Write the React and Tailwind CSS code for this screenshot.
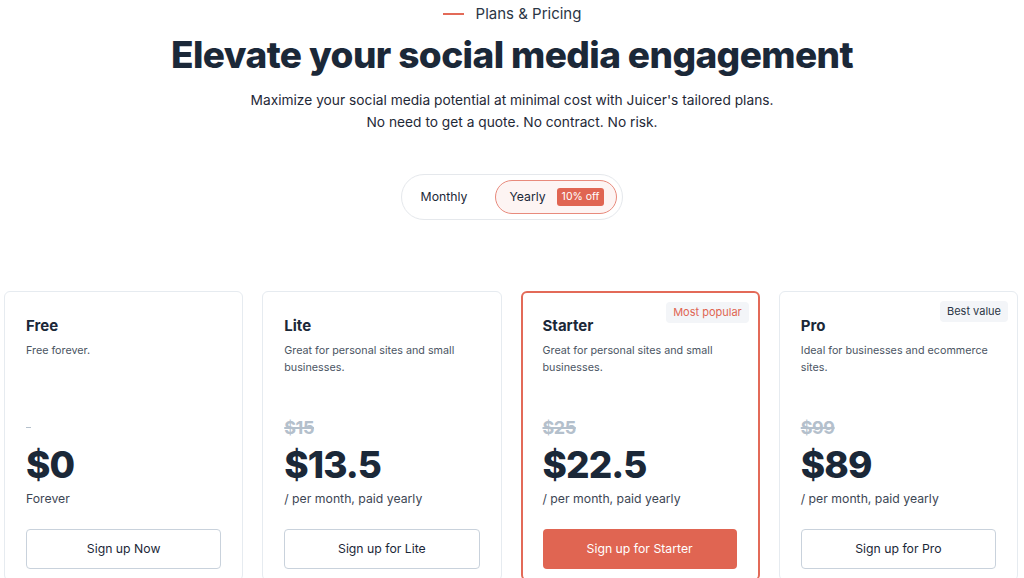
import React from 'react';

const plans = [
  {
    name: 'Free',
    desc: 'Free forever.',
    old: null,
    price: '$0',
    period: 'Forever',
    cta: 'Sign up Now',
  },
  {
    name: 'Lite',
    desc: 'Great for personal sites and small businesses.',
    old: '$15',
    price: '$13.5',
    period: '/ per month, paid yearly',
    cta: 'Sign up for Lite',
  },
  {
    name: 'Starter',
    desc: 'Great for personal sites and small businesses.',
    old: '$25',
    price: '$22.5',
    period: '/ per month, paid yearly',
    cta: 'Sign up for Starter',
    badge: 'Most popular',
    featured: true,
  },
  {
    name: 'Pro',
    desc: 'Ideal for businesses and ecommerce sites.',
    old: '$99',
    price: '$89',
    period: '/ per month, paid yearly',
    cta: 'Sign up for Pro',
    badge: 'Best value',
  },
];

const PlanCard = ({ plan }) => (
  <div
    className={`relative flex flex-col rounded-md bg-white pr-[21px] ${
      plan.featured
        ? 'border-2 border-[#e36a58] pl-[20px] pt-[23px]'
        : 'border border-[#e6ebf0] pl-[21px] pt-[24px]'
    }`}
  >
    {plan.badge && (
      <span
        className={`absolute right-[9px] top-[9px] rounded bg-[#f3f5f8] px-[7px] py-[3px] text-[11px] leading-[15px] ${
          plan.featured ? 'text-[#e06552]' : 'text-[#2b3645]'
        }`}
      >
        {plan.badge}
      </span>
    )}
    <h3 className="text-[15px] font-bold leading-[20px] text-[#1b2838]">{plan.name}</h3>
    <p className="mt-[6px] h-[68px] text-[10.75px] leading-[17px] text-[#4b5563]">{plan.desc}</p>
    <div className="mt-[6px] h-[24px] text-[18px] font-bold leading-[24px] tracking-tight text-[#b4c0cc]">
      {plan.old ? (
        <span className="line-through decoration-2">{plan.old}</span>
      ) : (
        <span className="inline-block h-[1px] w-[5px] translate-y-[-2px] bg-[#b4c0cc] align-middle" />
      )}
    </div>
    <div className="mt-[3px] text-[37px] font-extrabold leading-[44px] tracking-tight text-[#1b2838]">
      {plan.price}
    </div>
    <div className="mt-[3px] text-[12.25px] leading-[18px] text-[#3d4654]">{plan.period}</div>
    <button
      className={`mt-[21px] mb-[10px] h-[40px] w-full rounded text-[12.25px] ${
        plan.featured
          ? 'bg-[#e06552] text-white'
          : 'border border-[#c9d2dc] bg-white text-[#1b2838]'
      }`}
    >
      {plan.cta}
    </button>
  </div>
);

export default function App() {
  return (
    <div className="min-h-[578px] overflow-hidden bg-white font-['Inter',sans-serif] text-[#1b2838]">
      <div className="flex flex-col items-center">
        <div className="mt-[4px] flex items-center gap-[12px]">
          <span className="h-[2px] w-[21px] bg-[#e36a58]" />
          <span className="text-[15px] leading-[20px] text-[#2b3645]">Plans &amp; Pricing</span>
        </div>
        <h1 className="mt-[9px] text-[37px] font-extrabold leading-[44px] tracking-[-0.6px] text-[#1b2838]">
          Elevate your social media engagement
        </h1>
        <p className="mt-[12px] text-center text-[13.75px] leading-[22px] text-[#1f2937]">
          Maximize your social media potential at minimal cost with Juicer's tailored plans.
          <br />
          No need to get a quote. No contract. No risk.
        </p>
        <div className="mt-[41px] flex h-[46px] items-center rounded-full border border-[#e5e8ec] pl-[19px] pr-[5px]">
          <span className="mr-[28px] text-[12.25px] text-[#1b2838]">Monthly</span>
          <div className="flex h-[34px] items-center gap-[11px] rounded-full border border-[#e88a7c] bg-[#fdf4f3] pl-[13px] pr-[12px]">
            <span className="text-[12.25px] text-[#1b2838]">Yearly</span>
            <span className="rounded-[3px] bg-[#e06552] px-[5px] py-[1px] text-[10.5px] leading-[16px] text-white">
              10% off
            </span>
          </div>
        </div>
      </div>
      <div className="mt-[71px] grid grid-cols-4 gap-[19px] pl-[4px] pr-[6px]">
        {plans.map((p) => (
          <PlanCard key={p.name} plan={p} />
        ))}
      </div>
    </div>
  );
}
